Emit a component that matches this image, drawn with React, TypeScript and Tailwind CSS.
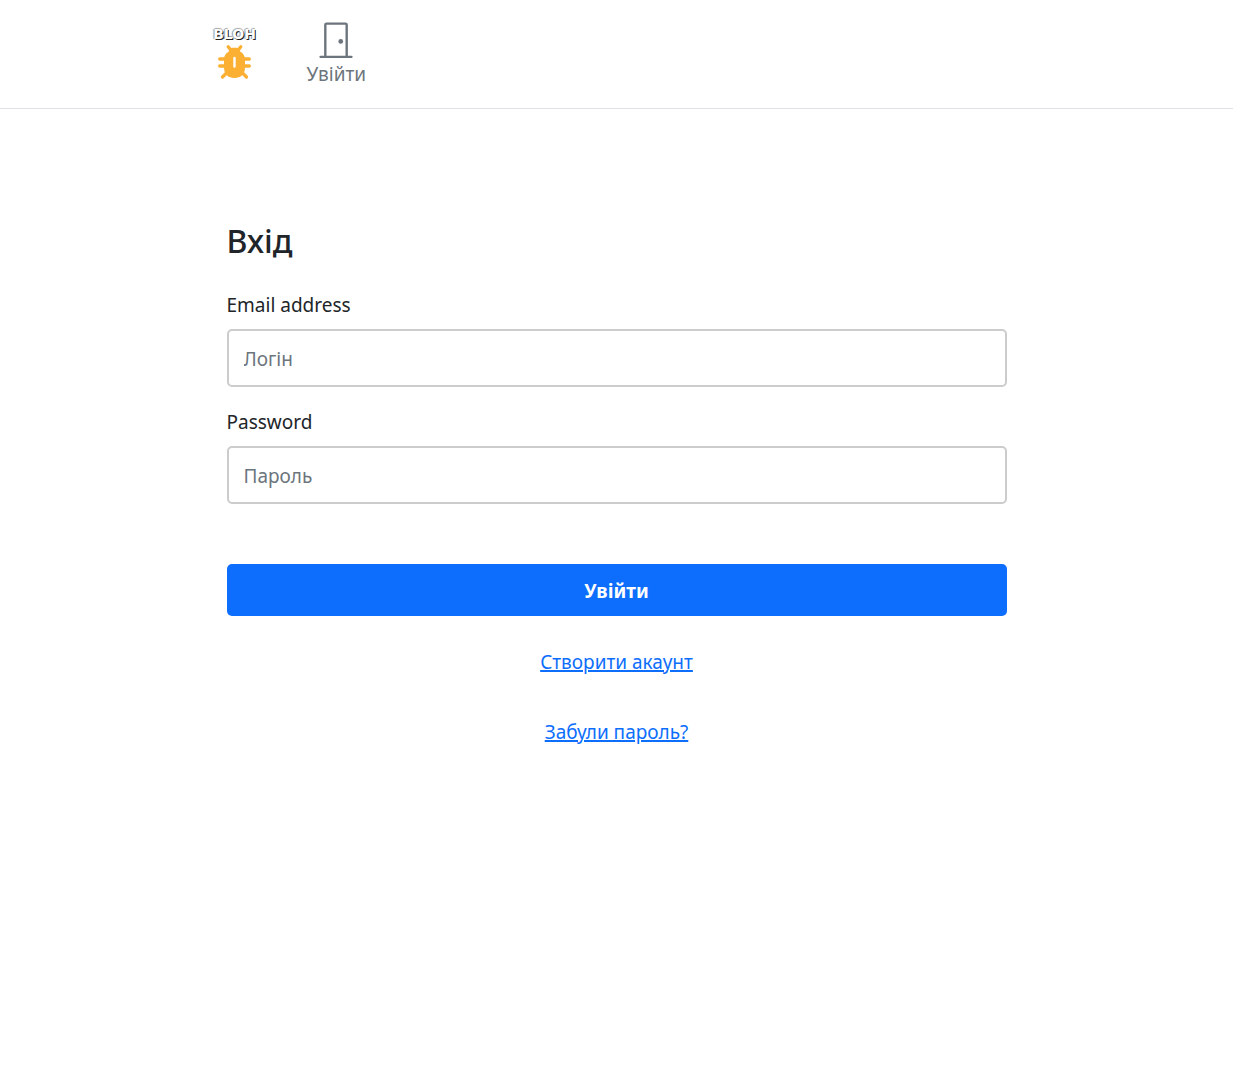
function BugLogo() {
  return (
    <svg viewBox="0 0 34 36" className="h-9 w-[34px]" aria-hidden="true">
      <g stroke="#fbb034" strokeWidth="3.300" strokeLinecap="round" fill="none">
        <path d="M10.200 2.800 14 7.500M22.800 2.800 19 7.500" />
        <path d="M1.700 15H9M1.700 22H9M24 15h7.300M24 22h7.300" />
        <path d="M9.500 28 4.500 33M23.500 28l5 5" />
      </g>
      <path
        fill="#fbb034"
        fillRule="evenodd"
        d="M14.500 3.700h4c2 0 3.200 1.300 3.700 3.800 3.300 2 4.800 4.500 4.800 8v8c0 6.500-4 10.500-10.500 10.500S6 30 6 23.500v-8c0-3.500 1.500-6 4.800-8 .5-2.500 1.700-3.800 3.700-3.800zM16.500 12.800a1.200 1.200 0 0 0-1.200 1.200v8.500a1.200 1.200 0 0 0 2.400 0v-8.500a1.200 1.200 0 0 0-1.200-1.200z"
      />
    </svg>
  );
}

function DoorIcon() {
  return (
    <svg viewBox="0 0 16 16" fill="currentColor" className="size-[38px]" aria-hidden="true">
      <path d="M3 2a1 1 0 0 1 1-1h8a1 1 0 0 1 1 1v13h1.500a.5.5 0 0 1 0 1h-13a.5.5 0 0 1 0-1H3zm1 13h8V2H4z" />
      <path d="M9 9a1 1 0 1 0 2 0 1 1 0 0 0-2 0" />
    </svg>
  );
}

type FieldProps = { id: string; label: string; type: string; placeholder: string };

function Field({ id, label, type, placeholder }: FieldProps) {
  return (
    <div className="flex flex-col gap-2">
      <label htmlFor={id} className="leading-8">
        {label}
      </label>
      <input
        id={id}
        type={type}
        placeholder={placeholder}
        className="h-[58px] w-full rounded-[5px] border-2 border-[#cccccc] px-[15px] pt-px placeholder:text-[#6c757d]"
      />
    </div>
  );
}

export default function App() {
  return (
    <div className="min-h-screen bg-white font-['Noto_Sans',sans-serif] text-[19px] text-[#212529]">
      <header className="border-b border-[#dee2e6] px-4">
        <nav className="mx-auto flex h-[108px] max-w-[812px] items-start gap-12 pt-5">
          <a href="#" className="flex w-12 flex-col items-center pt-1">
            <span className="font-['DejaVu_Sans',sans-serif] text-[14px] leading-5 font-bold text-white [text-shadow:1px_1px_0_#222,-1px_0_1px_#999,0_-1px_1px_#aaa]">
              BLOH
            </span>
            <BugLogo />
          </a>
          <a href="#" className="flex flex-col items-center text-[#6c757d]">
            <DoorIcon />
            <span className="leading-8">Увійти</span>
          </a>
        </nav>
      </header>
      <main className="mx-auto max-w-[812px] px-4 pt-[112px]">
        <form className="flex flex-col">
          <h1 className="mb-7 text-[32px] leading-10 font-medium">Вхід</h1>
          <div className="flex flex-col gap-[19px]">
            <Field id="email" label="Email address" type="email" placeholder="Логін" />
            <Field id="password" label="Password" type="password" placeholder="Пароль" />
          </div>
          <button
            type="button"
            className="mt-[60px] h-[52px] w-full rounded-[5px] bg-[#0d6efd] pt-0.5 font-bold text-white"
          >
            Увійти
          </button>
          <div className="mt-[30px] flex flex-col items-center gap-[38px] leading-8 text-[#0d6efd]">
            <a href="#" className="underline decoration-2">Створити акаунт</a>
            <a href="#" className="underline decoration-2">Забули пароль?</a>
          </div>
        </form>
      </main>
    </div>
  );
}
